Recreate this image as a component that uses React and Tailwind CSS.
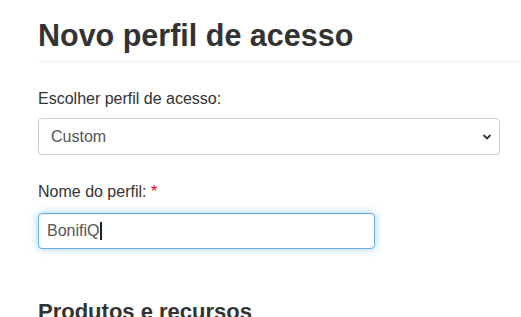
import React from 'react'

export default function App() {
  return (
    <div
      className="min-h-[317px] bg-white pl-[38px] text-[#333]"
      style={{ fontFamily: '"Liberation Sans", Arial, sans-serif' }}
    >
      <div className="pt-[17px] pb-[8px] border-b border-[#eee]">
        <h1 className="text-[30.5px] font-bold leading-[36px] m-0">Novo perfil de acesso</h1>
      </div>

      <div className="pt-[27px] pr-[21px]">
        <label className="block text-[16px] leading-[20px] mb-[9px]">Escolher perfil de acesso:</label>
        <div className="relative">
          <select
            defaultValue="Custom"
            className="appearance-none w-full h-[37px] rounded-[4px] border border-[#ccc] bg-white pl-[12px] pr-8 text-[16px] text-[#555] outline-none"
            style={{ fontFamily: '"Liberation Sans", Arial, sans-serif' }}
          >
            <option>Custom</option>
          </select>
          <svg
            className="absolute right-[8px] top-[14px] w-[10px] h-[10px] pointer-events-none"
            viewBox="0 0 10 10"
          >
            <path d="M1.5 3 L5 6.5 L8.5 3" fill="none" stroke="#333" strokeWidth="1.8" />
          </svg>
        </div>
      </div>

      <div className="pt-[27px]">
        <label className="block text-[16px] leading-[20px] mb-[11px]">
          Nome do perfil: <span className="text-red-600">*</span>
        </label>
        <div className="w-[337px] h-[36px] rounded-[4px] border border-[#66afe9] bg-white pl-[8px] flex items-center shadow-[inset_0_1px_1px_rgba(0,0,0,0.075),0_0_8px_rgba(102,175,233,0.6)]">
          <span className="text-[16px] text-[#555]">BonifiQ</span>
          <span className="w-[1.5px] h-[18px] bg-[#222] ml-[1px]"></span>
        </div>
      </div>

      <h2 className="pt-[50px] text-[22px] font-bold leading-[26px]">Produtos e recursos</h2>
    </div>
  )
}
